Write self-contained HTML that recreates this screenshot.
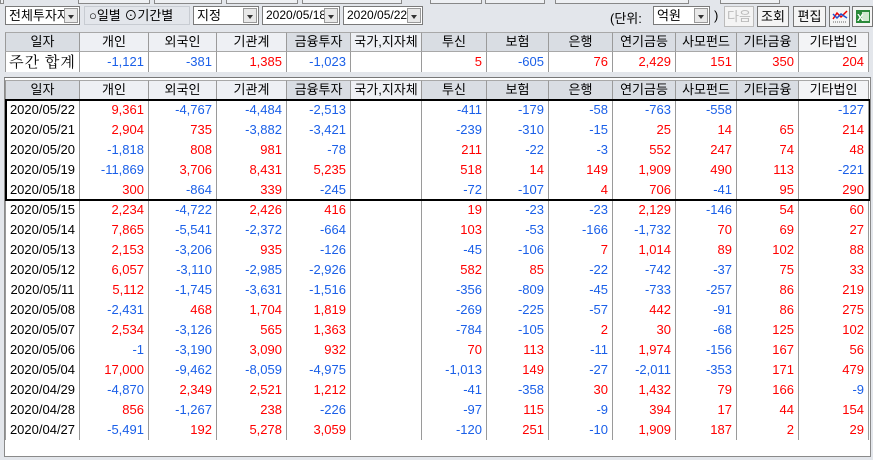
<!DOCTYPE html>
<html><head><meta charset="utf-8">
<style>
*{box-sizing:border-box;margin:0;padding:0}
body{width:873px;height:460px;background:#e3e6eb;font-family:"Liberation Sans","Noto Sans CJK KR",sans-serif;font-size:12px;position:relative;overflow:hidden;color:#000}
.a{position:absolute}
.tab{position:absolute;top:0;height:4px;border:1px solid #888;border-top:none;background:#eef0f3}
.sel{position:absolute;background:#fff;border:1px solid #7a7a7a;height:19px;line-height:17px;padding-left:3px;font-size:13px}
.dd{position:absolute;right:1px;top:1px;width:14px;height:15px;background:#e8e8e8;border:1px solid #999}
.dd:after{content:"";position:absolute;left:3px;top:6px;border-left:3px solid transparent;border-right:3px solid transparent;border-top:4px solid #333}
.btn{position:absolute;top:6px;height:21px;border:1px solid #777;background:#f4f4f4;text-align:center;line-height:19px;font-size:13px}
.t{position:absolute;left:5px;width:864px}
.row{display:flex;height:20px}
.row>div{flex:none;height:100%;text-align:right;padding-right:4px;border-left:1px solid #9a9a9a;white-space:nowrap;font-size:13px;line-height:20px}
.row>div:last-child{border-right:1px solid #9a9a9a}
.row.h{height:20px}
.row.h>div{background:#d9dde3;text-align:center;padding:0;font-size:13px;line-height:18px;border-top:1px solid #a8a8a8;border-bottom:1px solid #a8a8a8}
.row>div:nth-child(1){width:74px}.row>div:nth-child(2){width:69px}.row>div:nth-child(3){width:68px}.row>div:nth-child(4){width:70px}.row>div:nth-child(5){width:64px}.row>div:nth-child(6){width:71px}.row>div:nth-child(7){width:65px}.row>div:nth-child(8){width:62px}.row>div:nth-child(9){width:64px}.row>div:nth-child(10){width:63px}.row>div:nth-child(11){width:61px}.row>div:nth-child(12){width:62px}.row>div:nth-child(13){width:71px}
.row.h>div:nth-child(2),.row.h>div:nth-child(3),.row.h>div:nth-child(4),.row.h>div:nth-child(6){background:#eef0f4}
.row.h>div:nth-child(13){background:#f3f4f6}
.row>div.d{text-align:center;padding:0;color:#000}
.r{color:#f00}.b{color:#1a5fe8}
</style></head><body>
<div class="tab" style="left:0;width:4px"></div>
<div class="tab" style="left:78px;width:72px"></div>
<div class="tab" style="left:154px;width:68px"></div>
<div class="tab" style="left:226px;width:72px"></div>
<div class="tab" style="left:302px;width:100px"></div>
<div class="tab" style="left:430px;width:52px"></div>
<div class="tab" style="left:485px;width:60px"></div>
<div class="tab" style="left:555px;width:134px"></div>
<div class="tab" style="left:720px;width:60px"></div>

<div class="sel" style="left:5px;top:6px;width:75px;font-size:13px">전체투자자<div class="dd"></div></div>
<div class="a" style="left:84px;top:6px;width:106px;height:19px;border:1px solid #c8ccd2;font-size:13px;line-height:17px;padding-left:4px">○일별 ⊙기간별</div>
<div class="sel" style="left:193px;top:6px;width:66px">지정<div class="dd"></div></div>
<div class="sel" style="left:262px;top:6px;width:78px;font-size:12px">2020/05/18<div class="dd"></div></div>
<div class="sel" style="left:343px;top:6px;width:80px;font-size:12px">2020/05/22<div class="dd"></div></div>

<div class="a" style="left:610px;top:8px;font-size:13px">(단위:</div>
<div class="sel" style="left:653px;top:6px;width:57px">억원<div class="dd"></div></div>
<div class="a" style="left:714px;top:8px;font-size:13px">)</div>
<div class="btn" style="left:724px;width:30px;color:#bbb;border-color:#bbb">다음</div>
<div class="btn" style="left:757px;width:32px">조회</div>
<div class="btn" style="left:793px;width:33px">편집</div>
<div class="btn" style="left:829px;width:21px;padding:2px"><svg width="16" height="14"><path d="M1 10 L5 4 L9 8 L15 2" stroke="#e00" fill="none" stroke-width="1.5"/><path d="M1 5 L5 9 L9 5 L15 9" stroke="#2050d0" fill="none" stroke-width="1.5"/><path d="M1 13 H15" stroke="#666" stroke-dasharray="1 1"/></svg></div>
<div class="btn" style="left:852px;width:21px;padding:2px"><svg width="16" height="15"><rect x="1" y="1" width="14" height="13" fill="#2a8a3a"/><rect x="7" y="3" width="7" height="9" fill="#cfe8cf"/><text x="2" y="12" font-size="10" fill="#fff" font-weight="bold" font-family="Liberation Sans">X</text></svg></div>

<div class="t" style="top:32px">
<div class="row h"><div>일자</div><div>개인</div><div>외국인</div><div>기관계</div><div>금융투자</div><div>국가,지자체</div><div>투신</div><div>보험</div><div>은행</div><div>연기금등</div><div>사모펀드</div><div>기타금융</div><div>기타법인</div></div>
<div class="row" style="background:#fff"><div class="d" style="font-size:15px;font-family:'Noto Serif CJK SC',serif;letter-spacing:1px">주간 합계</div><div class="b">-1,121</div><div class="b">-381</div><div class="r">1,385</div><div class="b">-1,023</div><div></div><div class="r">5</div><div class="b">-605</div><div class="r">76</div><div class="r">2,429</div><div class="r">151</div><div class="r">350</div><div class="r">204</div></div>
</div>

<div class="a" style="left:4px;top:77px;width:867px;height:380px;background:#fff;border:1px solid #8a8a8a;border-top-color:#777"></div>
<div class="t" style="top:80px">
<div class="row h"><div>일자</div><div>개인</div><div>외국인</div><div>기관계</div><div>금융투자</div><div>국가,지자체</div><div>투신</div><div>보험</div><div>은행</div><div>연기금등</div><div>사모펀드</div><div>기타금융</div><div>기타법인</div></div>
<div class="row"><div class="d">2020/05/22</div><div class="r">9,361</div><div class="b">-4,767</div><div class="b">-4,484</div><div class="b">-2,513</div><div></div><div class="b">-411</div><div class="b">-179</div><div class="b">-58</div><div class="b">-763</div><div class="b">-558</div><div></div><div class="b">-127</div></div>
<div class="row"><div class="d">2020/05/21</div><div class="r">2,904</div><div class="r">735</div><div class="b">-3,882</div><div class="b">-3,421</div><div></div><div class="b">-239</div><div class="b">-310</div><div class="b">-15</div><div class="r">25</div><div class="r">14</div><div class="r">65</div><div class="r">214</div></div>
<div class="row"><div class="d">2020/05/20</div><div class="b">-1,818</div><div class="r">808</div><div class="r">981</div><div class="b">-78</div><div></div><div class="r">211</div><div class="b">-22</div><div class="b">-3</div><div class="r">552</div><div class="r">247</div><div class="r">74</div><div class="r">48</div></div>
<div class="row"><div class="d">2020/05/19</div><div class="b">-11,869</div><div class="r">3,706</div><div class="r">8,431</div><div class="r">5,235</div><div></div><div class="r">518</div><div class="r">14</div><div class="r">149</div><div class="r">1,909</div><div class="r">490</div><div class="r">113</div><div class="b">-221</div></div>
<div class="row"><div class="d">2020/05/18</div><div class="r">300</div><div class="b">-864</div><div class="r">339</div><div class="b">-245</div><div></div><div class="b">-72</div><div class="b">-107</div><div class="r">4</div><div class="r">706</div><div class="b">-41</div><div class="r">95</div><div class="r">290</div></div>
<div class="row"><div class="d">2020/05/15</div><div class="r">2,234</div><div class="b">-4,722</div><div class="r">2,426</div><div class="r">416</div><div></div><div class="r">19</div><div class="b">-23</div><div class="b">-23</div><div class="r">2,129</div><div class="b">-146</div><div class="r">54</div><div class="r">60</div></div>
<div class="row"><div class="d">2020/05/14</div><div class="r">7,865</div><div class="b">-5,541</div><div class="b">-2,372</div><div class="b">-664</div><div></div><div class="r">103</div><div class="b">-53</div><div class="b">-166</div><div class="b">-1,732</div><div class="r">70</div><div class="r">69</div><div class="r">27</div></div>
<div class="row"><div class="d">2020/05/13</div><div class="r">2,153</div><div class="b">-3,206</div><div class="r">935</div><div class="b">-126</div><div></div><div class="b">-45</div><div class="b">-106</div><div class="r">7</div><div class="r">1,014</div><div class="r">89</div><div class="r">102</div><div class="r">88</div></div>
<div class="row"><div class="d">2020/05/12</div><div class="r">6,057</div><div class="b">-3,110</div><div class="b">-2,985</div><div class="b">-2,926</div><div></div><div class="r">582</div><div class="r">85</div><div class="b">-22</div><div class="b">-742</div><div class="b">-37</div><div class="r">75</div><div class="r">33</div></div>
<div class="row"><div class="d">2020/05/11</div><div class="r">5,112</div><div class="b">-1,745</div><div class="b">-3,631</div><div class="b">-1,516</div><div></div><div class="b">-356</div><div class="b">-809</div><div class="b">-45</div><div class="b">-733</div><div class="b">-257</div><div class="r">86</div><div class="r">219</div></div>
<div class="row"><div class="d">2020/05/08</div><div class="b">-2,431</div><div class="r">468</div><div class="r">1,704</div><div class="r">1,819</div><div></div><div class="b">-269</div><div class="b">-225</div><div class="b">-57</div><div class="r">442</div><div class="b">-91</div><div class="r">86</div><div class="r">275</div></div>
<div class="row"><div class="d">2020/05/07</div><div class="r">2,534</div><div class="b">-3,126</div><div class="r">565</div><div class="r">1,363</div><div></div><div class="b">-784</div><div class="b">-105</div><div class="r">2</div><div class="r">30</div><div class="b">-68</div><div class="r">125</div><div class="r">102</div></div>
<div class="row"><div class="d">2020/05/06</div><div class="b">-1</div><div class="b">-3,190</div><div class="r">3,090</div><div class="r">932</div><div></div><div class="r">70</div><div class="r">113</div><div class="b">-11</div><div class="r">1,974</div><div class="b">-156</div><div class="r">167</div><div class="r">56</div></div>
<div class="row"><div class="d">2020/05/04</div><div class="r">17,000</div><div class="b">-9,462</div><div class="b">-8,059</div><div class="b">-4,975</div><div></div><div class="b">-1,013</div><div class="r">149</div><div class="b">-27</div><div class="b">-2,011</div><div class="b">-353</div><div class="r">171</div><div class="r">479</div></div>
<div class="row"><div class="d">2020/04/29</div><div class="b">-4,870</div><div class="r">2,349</div><div class="r">2,521</div><div class="r">1,212</div><div></div><div class="b">-41</div><div class="b">-358</div><div class="r">30</div><div class="r">1,432</div><div class="r">79</div><div class="r">166</div><div class="b">-9</div></div>
<div class="row"><div class="d">2020/04/28</div><div class="r">856</div><div class="b">-1,267</div><div class="r">238</div><div class="b">-226</div><div></div><div class="b">-97</div><div class="r">115</div><div class="b">-9</div><div class="r">394</div><div class="r">17</div><div class="r">44</div><div class="r">154</div></div>
<div class="row"><div class="d">2020/04/27</div><div class="b">-5,491</div><div class="r">192</div><div class="r">5,278</div><div class="r">3,059</div><div></div><div class="b">-120</div><div class="r">251</div><div class="b">-10</div><div class="r">1,909</div><div class="r">187</div><div class="r">2</div><div class="r">29</div></div>
</div>
<div class="a" style="left:5px;top:99px;width:865px;height:102px;border:2px solid #000;border-width:2px 1px 2px 2px"></div>
</body></html>
